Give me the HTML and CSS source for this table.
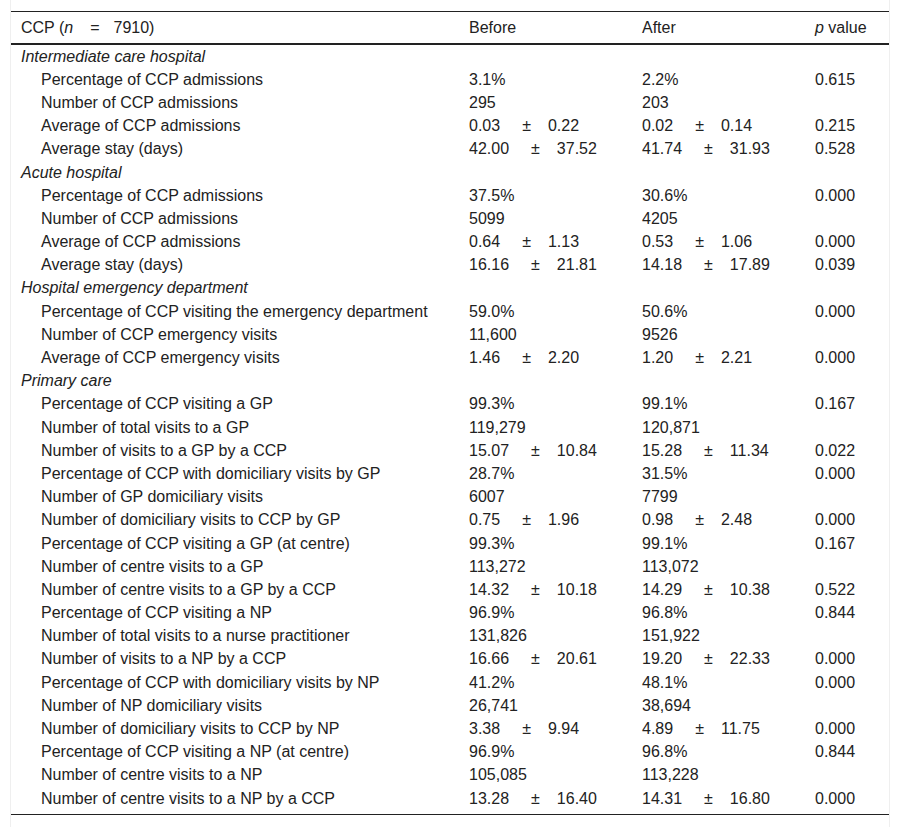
FILE: index.html
```html
<!DOCTYPE html>
<html>
<head>
<meta charset="utf-8">
<link rel="stylesheet" href="styles.css">
</head>
<body>
<div class="wrap">
<table class="tbl">
<colgroup><col class="c1"><col class="c2"><col class="c3"><col class="c4"></colgroup>
<thead>
<tr><th>CCP (<i>n</i><span class="eq">=</span>7910)</th><th>Before</th><th>After</th><th><i>p</i> value</th></tr>
</thead>
<tbody>
<tr class="sec"><td colspan="4"><i>Intermediate care hospital</i></td></tr>
<tr><td class="ind">Percentage of CCP admissions</td><td>3.1%</td><td>2.2%</td><td>0.615</td></tr>
<tr><td class="ind">Number of CCP admissions</td><td>295</td><td>203</td><td></td></tr>
<tr><td class="ind">Average of CCP admissions</td><td>0.03<span class="pm">±</span>0.22</td><td>0.02<span class="pm">±</span>0.14</td><td>0.215</td></tr>
<tr><td class="ind">Average stay (days)</td><td>42.00<span class="pm">±</span>37.52</td><td>41.74<span class="pm">±</span>31.93</td><td>0.528</td></tr>
<tr class="sec"><td colspan="4"><i>Acute hospital</i></td></tr>
<tr><td class="ind">Percentage of CCP admissions</td><td>37.5%</td><td>30.6%</td><td>0.000</td></tr>
<tr><td class="ind">Number of CCP admissions</td><td>5099</td><td>4205</td><td></td></tr>
<tr><td class="ind">Average of CCP admissions</td><td>0.64<span class="pm">±</span>1.13</td><td>0.53<span class="pm">±</span>1.06</td><td>0.000</td></tr>
<tr><td class="ind">Average stay (days)</td><td>16.16<span class="pm">±</span>21.81</td><td>14.18<span class="pm">±</span>17.89</td><td>0.039</td></tr>
<tr class="sec"><td colspan="4"><i>Hospital emergency department</i></td></tr>
<tr><td class="ind">Percentage of CCP visiting the emergency department</td><td>59.0%</td><td>50.6%</td><td>0.000</td></tr>
<tr><td class="ind">Number of CCP emergency visits</td><td>11,600</td><td>9526</td><td></td></tr>
<tr><td class="ind">Average of CCP emergency visits</td><td>1.46<span class="pm">±</span>2.20</td><td>1.20<span class="pm">±</span>2.21</td><td>0.000</td></tr>
<tr class="sec"><td colspan="4"><i>Primary care</i></td></tr>
<tr><td class="ind">Percentage of CCP visiting a GP</td><td>99.3%</td><td>99.1%</td><td>0.167</td></tr>
<tr><td class="ind">Number of total visits to a GP</td><td>119,279</td><td>120,871</td><td></td></tr>
<tr><td class="ind">Number of visits to a GP by a CCP</td><td>15.07<span class="pm">±</span>10.84</td><td>15.28<span class="pm">±</span>11.34</td><td>0.022</td></tr>
<tr><td class="ind">Percentage of CCP with domiciliary visits by GP</td><td>28.7%</td><td>31.5%</td><td>0.000</td></tr>
<tr><td class="ind">Number of GP domiciliary visits</td><td>6007</td><td>7799</td><td></td></tr>
<tr><td class="ind">Number of domiciliary visits to CCP by GP</td><td>0.75<span class="pm">±</span>1.96</td><td>0.98<span class="pm">±</span>2.48</td><td>0.000</td></tr>
<tr><td class="ind">Percentage of CCP visiting a GP (at centre)</td><td>99.3%</td><td>99.1%</td><td>0.167</td></tr>
<tr><td class="ind">Number of centre visits to a GP</td><td>113,272</td><td>113,072</td><td></td></tr>
<tr><td class="ind">Number of centre visits to a GP by a CCP</td><td>14.32<span class="pm">±</span>10.18</td><td>14.29<span class="pm">±</span>10.38</td><td>0.522</td></tr>
<tr><td class="ind">Percentage of CCP visiting a NP</td><td>96.9%</td><td>96.8%</td><td>0.844</td></tr>
<tr><td class="ind">Number of total visits to a nurse practitioner</td><td>131,826</td><td>151,922</td><td></td></tr>
<tr><td class="ind">Number of visits to a NP by a CCP</td><td>16.66<span class="pm">±</span>20.61</td><td>19.20<span class="pm">±</span>22.33</td><td>0.000</td></tr>
<tr><td class="ind">Percentage of CCP with domiciliary visits by NP</td><td>41.2%</td><td>48.1%</td><td>0.000</td></tr>
<tr><td class="ind">Number of NP domiciliary visits</td><td>26,741</td><td>38,694</td><td></td></tr>
<tr><td class="ind">Number of domiciliary visits to CCP by NP</td><td>3.38<span class="pm">±</span>9.94</td><td>4.89<span class="pm">±</span>11.75</td><td>0.000</td></tr>
<tr><td class="ind">Percentage of CCP visiting a NP (at centre)</td><td>96.9%</td><td>96.8%</td><td>0.844</td></tr>
<tr><td class="ind">Number of centre visits to a NP</td><td>105,085</td><td>113,228</td><td></td></tr>
<tr><td class="ind">Number of centre visits to a NP by a CCP</td><td>13.28<span class="pm">±</span>16.40</td><td>14.31<span class="pm">±</span>16.80</td><td>0.000</td></tr>
</tbody>
</table>
<div class="endrule"></div>
</div>
</body>
</html>
```

FILE: styles.css
```css
html, body {
  margin: 0;
  padding: 0;
  background: #ffffff;
}
body {
  font-family: "Liberation Sans", Arial, sans-serif;
  font-size: 16px;
  color: #222222;
}
.wrap {
  margin: 0 10px;
  padding-top: 11px;
  width: 880px;
  border-left: 1px solid #efefef;
  border-right: 1px solid #efefef;
  box-sizing: border-box;
  height: 827px;
}
.tbl {
  width: 878px;
  table-layout: fixed;
  border-collapse: collapse;
  border-top: 1px solid #222222;
}
.c1 { width: 448px; }
.c2 { width: 173px; }
.c3 { width: 173px; }
.c4 { width: 84px; }
.tbl th {
  font-weight: normal;
  text-align: left;
  height: 31px;
  padding: 0 0 0 10px;
  border-bottom: 2px solid #222222;
  vertical-align: middle;
  line-height: 16px;
}
.tbl td {
  padding: 0 0 0 10px;
  height: 23.2px;
  line-height: 16px;
  vertical-align: middle;
  white-space: nowrap;
}
.tbl td.ind {
  padding-left: 30px;
}
.endrule {
  margin-top: 4px;
  border-top: 1px solid #222222;
}
.pm {
  display: inline-block;
  padding: 0 17px 0 22px;
}
.eq {
  display: inline-block;
  padding: 0 14px 0 17px;
}
```
